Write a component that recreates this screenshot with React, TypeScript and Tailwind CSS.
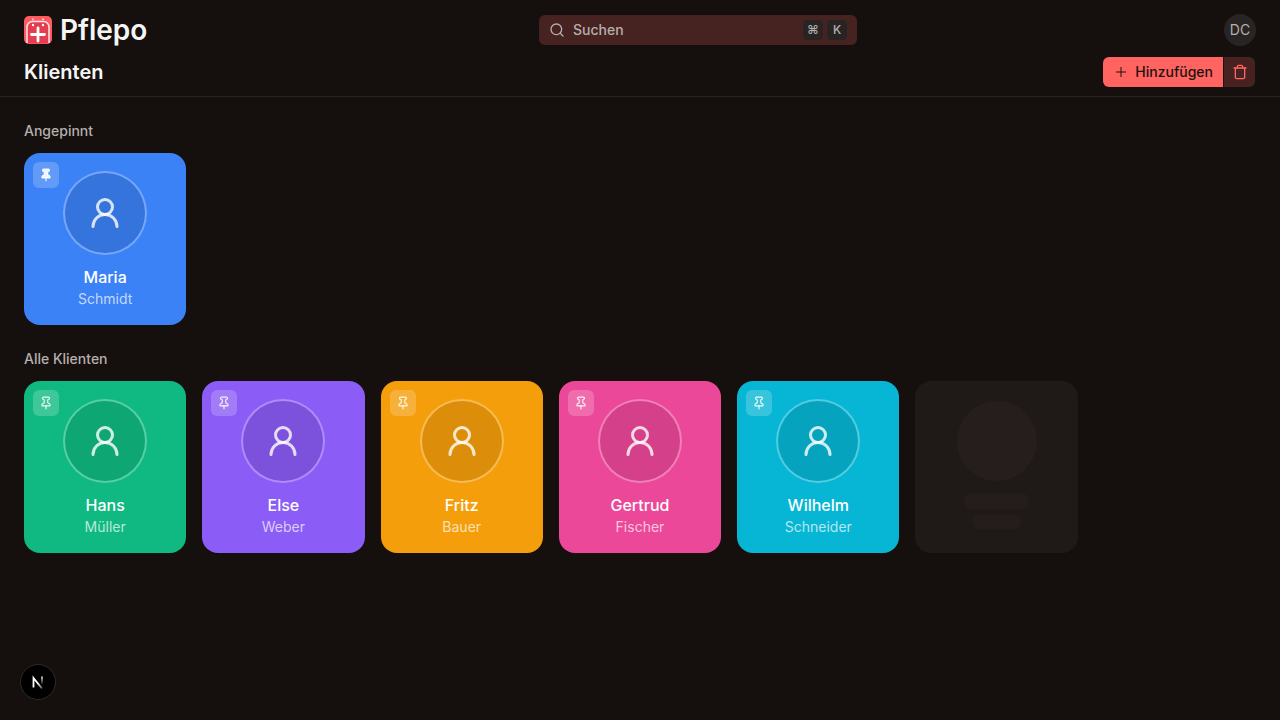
import type { ReactNode } from "react";
import { Pin, Plus, Search, Trash, UserRound } from "lucide-react";

type Client = {
  firstName: string;
  lastName: string;
  color: string;
  pinned?: boolean;
};

const clients: Client[] = [
  { firstName: "Maria", lastName: "Schmidt", color: "bg-[#3b82f6]", pinned: true },
  { firstName: "Hans", lastName: "Müller", color: "bg-[#10b981]" },
  { firstName: "Else", lastName: "Weber", color: "bg-[#8b5cf6]" },
  { firstName: "Fritz", lastName: "Bauer", color: "bg-[#f59e0b]" },
  { firstName: "Gertrud", lastName: "Fischer", color: "bg-[#ec4899]" },
  { firstName: "Wilhelm", lastName: "Schneider", color: "bg-[#06b6d4]" },
];

function Logo() {
  return (
    <svg viewBox="0 0 28 28" className="size-7 shrink-0" aria-hidden="true">
      <defs>
        <clipPath id="logo-clip">
          <rect width="28" height="28" rx="5" />
        </clipPath>
      </defs>
      <g clipPath="url(#logo-clip)">
        <rect width="28" height="28" fill="#ff5a5f" />
        <path d="M3 27.3V11a5.5 5.5 0 0 1 5.5-5.5h11A5.5 5.5 0 0 1 25 11v16.3" fill="#e23d50" stroke="#ffe4e6" strokeWidth="1.5" />
        <path d="M9 3v.5M19 3v.5" stroke="#ffe4e6" strokeWidth="1.5" strokeLinecap="round" />
        <path d="M9 8.8v.4M19 8.8v.4" stroke="#fff" strokeWidth="2.2" strokeLinecap="round" />
        <path d="M14 12v13M7.5 18.5h13" stroke="#fff" strokeWidth="2.8" strokeLinecap="round" />
      </g>
    </svg>
  );
}

function Key({ children }: { children: ReactNode }) {
  return (
    <kbd className="flex size-5 items-center justify-center rounded bg-[#292424] font-[Inter,sans-serif] text-xs font-medium text-[#b5afad]">
      {children}
    </kbd>
  );
}

function ClientCard({ client }: { client: Client }) {
  return (
    <article className={`relative flex flex-col items-center rounded-2xl px-4 pt-5 pb-4 ${client.color}`}>
      <button
        type="button"
        aria-label={client.pinned ? "Lösen" : "Anpinnen"}
        className="absolute top-[9px] left-[9px] flex size-[26px] items-center justify-center rounded-md bg-white/20 text-white/90"
      >
        <Pin size={14} fill={client.pinned ? "currentColor" : "none"} />
      </button>
      <div className="mb-3 flex size-20 items-center justify-center rounded-full bg-black/10 text-white/80 ring-2 ring-white/30">
        <UserRound size={36} />
      </div>
      <h3 className="text-base font-medium text-white">{client.firstName}</h3>
      <p className="text-sm text-white/70">{client.lastName}</p>
    </article>
  );
}

function SkeletonCard() {
  return (
    <div className="flex flex-col items-center rounded-2xl bg-[#1f1a18] px-4 pt-5 pb-4">
      <div className="mb-3 size-20 rounded-full bg-[#261e1c]" />
      <div className="mb-1.5 h-4 w-1/2 rounded-full bg-[#241d1b]" />
      <div className="h-3.5 w-3/8 rounded-full bg-[#241d1b]" />
    </div>
  );
}

function Section({ title, children }: { title: string; children: ReactNode }) {
  return (
    <section>
      <h2 className="mb-3 text-sm font-medium text-[#b5afad]">{title}</h2>
      <div className="grid grid-cols-3 gap-4 md:grid-cols-5 lg:grid-cols-7">{children}</div>
    </section>
  );
}

export default function App() {
  return (
    <div className="min-h-screen bg-[#150f0e] font-[Inter,sans-serif] text-[#f5f5f4]">
      <header className="flex flex-col gap-2.5 border-b border-[#292322] px-6 pt-3.5 pb-2">
        <div className="flex h-8 items-center justify-between">
          <a href="#" className="flex w-37 items-center gap-2">
            <Logo />
            <span className="text-[28px] leading-8 font-semibold">Pflepo</span>
          </a>
          <button
            type="button"
            className="flex h-[30px] w-[318px] items-center gap-2 rounded-md bg-[#462321] px-2.5 text-sm font-medium text-[#b5afad]"
          >
            <Search size={16} />
            <span>Suchen</span>
            <span className="ml-auto flex gap-1">
              <Key>⌘</Key>
              <Key>K</Key>
            </span>
          </button>
          <button
            type="button"
            className="flex size-8 items-center justify-center rounded-full bg-[#292424] text-sm text-[#b5afad]"
          >
            DC
          </button>
        </div>
        <div className="flex items-center justify-between">
          <h1 className="text-xl font-semibold">Klienten</h1>
          <div className="flex gap-px p-px">
            <button
              type="button"
              className="flex h-[30px] items-center gap-1.5 rounded-l-md bg-[#ff6461] px-2.5 text-sm font-medium text-[#1b1210]"
            >
              <Plus size={16} strokeWidth={1.5} />
              Hinzufügen
            </button>
            <button
              type="button"
              aria-label="Löschen"
              className="flex h-[30px] w-[31px] items-center justify-center rounded-r-md bg-[#462321] text-[#ff6461]"
            >
              <Trash size={16} strokeWidth={2} />
            </button>
          </div>
        </div>
      </header>

      <main className="flex flex-col gap-6 p-6">
        <Section title="Angepinnt">
          {clients.filter((c) => c.pinned).map((c) => (
            <ClientCard key={c.firstName} client={c} />
          ))}
        </Section>
        <Section title="Alle Klienten">
          {clients.filter((c) => !c.pinned).map((c) => (
            <ClientCard key={c.firstName} client={c} />
          ))}
          <SkeletonCard />
        </Section>
      </main>

      {/* Dev-Tools Badge */}
      <button
        type="button"
        aria-label="Dev Tools"
        className="fixed bottom-5 left-5 flex size-9 items-center justify-center rounded-full border border-[#302b2a] bg-black"
      >
        <svg width="14" height="14" viewBox="0 0 14 14" fill="none" aria-hidden="true">
          <defs>
            <linearGradient id="n-bar" x1="0" y1="1" x2="0" y2="10" gradientUnits="userSpaceOnUse">
              <stop stopColor="#fff" />
              <stop offset="1" stopColor="#fff" stopOpacity="0" />
            </linearGradient>
            <linearGradient id="n-diagonal" x1="8" y1="8" x2="12" y2="14" gradientUnits="userSpaceOnUse">
              <stop stopColor="#fff" />
              <stop offset="1" stopColor="#fff" stopOpacity="0.2" />
            </linearGradient>
          </defs>
          <path d="M2.5 12.5V3l8.5 10.5" stroke="url(#n-diagonal)" strokeWidth="1.8" />
          <path d="M11 1.5V10" stroke="url(#n-bar)" strokeWidth="1.6" />
        </svg>
      </button>
    </div>
  );
}
